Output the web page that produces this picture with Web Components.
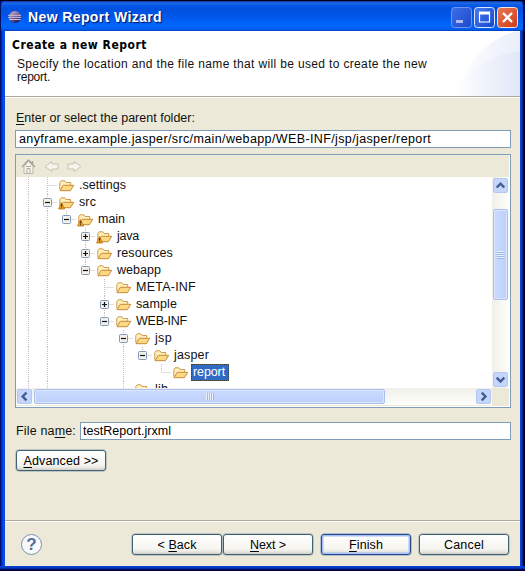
<!DOCTYPE html>
<html lang="en">
<head>
<meta charset="utf-8">
<title>New Report Wizard</title>
<style>
body{margin:0;width:525px;height:571px;overflow:hidden;background:#000;font:12.5px/14px "Liberation Sans",Arial,sans-serif;color:#111}
.body{display:flex;flex-direction:column;height:423px;padding:14px 9px 0 10px;box-sizing:border-box}
.label{margin-left:1px}
.file{display:flex;align-items:center;margin:14px 0 0 1px;height:18px}
.file fit-text{width:64px}
.file xp-field{flex:1}
.body .adv{margin:10px 0 0 1px}
.path{margin:5px 0}
.footer{display:flex;align-items:center;height:44px;padding:1px 11px 0 15px;box-sizing:border-box}
.gap{flex:1}
</style>
</head>
<body>
<xp-window>
  <fit-text slot="title" w="134">New Report Wizard</fit-text>
  <wizard-header>
    <fit-text slot="heading" w="135">Create a new Report</fit-text>
    <fit-text w="410">Specify the location and the file name that will be used to create the new</fit-text>
    <fit-text w="33">report.</fit-text>
  </wizard-header>
  <div class="body">
    <fit-text class="label" w="179"><u>E</u>nter or select the parent folder:</fit-text>
    <xp-field class="path"><fit-text w="412">anyframe.example.jasper/src/main/webapp/WEB-INF/jsp/jasper/report</fit-text></xp-field>
    <folder-tree>
      <tree-row cells="|T"><fit-text w="47">.settings</fit-text></tree-row>
      <tree-row cells="|-" warn><fit-text w="17">src</fit-text></tree-row>
      <tree-row cells="||m" warn><fit-text w="27">main</fit-text></tree-row>
      <tree-row cells="|| +" warn><fit-text w="22">java</fit-text></tree-row>
      <tree-row cells="|| +"><fit-text w="56">resources</fit-text></tree-row>
      <tree-row cells="|| m"><fit-text w="44">webapp</fit-text></tree-row>
      <tree-row cells="||  T"><fit-text w="60">META-INF</fit-text></tree-row>
      <tree-row cells="||  +"><fit-text w="41">sample</fit-text></tree-row>
      <tree-row cells="||  m"><fit-text w="51">WEB-INF</fit-text></tree-row>
      <tree-row cells="||   -"><fit-text w="17">jsp</fit-text></tree-row>
      <tree-row cells="||   |m"><fit-text w="35">jasper</fit-text></tree-row>
      <tree-row cells="||   | L" selected><fit-text w="32">report</fit-text></tree-row>
      <tree-row cells="||   T"><fit-text w="13">lib</fit-text></tree-row>
    </folder-tree>
    <div class="file"><fit-text w="60">File na<u>m</u>e:</fit-text><xp-field style="padding-left:2px"><fit-text w="88">testReport.jrxml</fit-text></xp-field></div>
    <xp-button class="adv"><fit-text w="75"><u>A</u>dvanced &gt;&gt;</fit-text></xp-button>
  </div>
  <div class="footer" slot="footer">
    <help-icon></help-icon><span class="gap"></span>
    <xp-button><fit-text w="39">&lt; <u>B</u>ack</fit-text></xp-button>
    <xp-button style="margin:0 8px 0 1px"><fit-text w="36"><u>N</u>ext &gt;</fit-text></xp-button>
    <xp-button default><fit-text w="34"><u>F</u>inish</fit-text></xp-button>
    <xp-button style="margin-left:8px"><fit-text w="40">Cancel</fit-text></xp-button>
  </div>
</xp-window>

<script>
function define(name, html, setup) {
  customElements.define(name, class extends HTMLElement {
    connectedCallback() {
      if (this.shadowRoot) return;
      const t = document.createElement('template');
      t.innerHTML = typeof html === 'function' ? html(this) : html;
      this.attachShadow({mode: 'open'}).appendChild(t.content.cloneNode(true));
      if (setup) setup(this);
    }
  });
}

define('xp-window', `<style>
:host{display:flex;flex-direction:column;width:525px;height:571px;box-sizing:border-box;padding:1px 5px 5px;position:relative;
 background:linear-gradient(90deg,#000030 0,#0019b0 1px,#0038d8 2px,#0a50ea 4px,#0648d8 5px,#0648d8 519px,#1048d0 520px,#0833bb 522px,#000f70 523px,#00001c 524px)}
:host::after{content:"";position:absolute;left:0;right:0;bottom:0;height:5px;background:linear-gradient(#0b45d5 0,#0632bd 2px,#001a88 3px,#000042 4px,#000025 5px)}
.bar{height:30px;flex-shrink:0;margin:0 -5px;padding:2px 5px 0 7px;box-sizing:border-box;display:flex;align-items:center;border-radius:5px 5px 0 0;border-right:2px solid #001063;border-left:1px solid #001063;
 background:linear-gradient(#0a3799 0,#2269e6 2px,#0759e8 4px,#0050de 8px,#0057eb 16px,#0066ff 24px,#0061f6 28px,#003ec2 30px)}
.title{flex:1;margin-left:6px;color:#fff;font:bold 14px/18px "Liberation Sans",sans-serif;text-shadow:1px 1px 1px #00146d}
svg{display:block}
.page{flex:1;background:#ece9d8;display:flex;flex-direction:column}
.sep{height:1px;background:#aca899;border-bottom:1px solid #fff}
window-button{margin-left:2px}
:host::before{content:"";position:absolute;left:0;right:0;top:0;height:1px;background:#00001e}
</style>
<div class="bar"><svg width="14" height="14" viewBox="0 0 14 14"><defs><linearGradient id="g" x2=".6" y2="1"><stop stop-color="#e3b9c2"/><stop offset=".5" stop-color="#7d68a0"/><stop offset="1" stop-color="#241c5c"/></linearGradient></defs><circle cx="7" cy="7" r="5.9" fill="url(#g)"/><path d="M0 5.3h13M0 7.4h13M1 9.5h11.5" stroke="#d9cbe4" stroke-width=".9"/></svg>
<div class="title"><slot name="title"></slot></div>
<window-button kind="min"></window-button><window-button kind="max"></window-button><window-button kind="close"></window-button></div>
<div class="page"><slot></slot><div class="sep"></div><slot name="footer"></slot></div>`);

define('window-button', el => {
  const k = el.getAttribute('kind');
  const glyph = {min: '<path d="M5 14.5h7" stroke="#a9bdf2" stroke-width="3"/>',
    max: '<path d="M5.5 6v9h10V6zM5 6.5h11" fill="none" stroke="#fff" stroke-width="1.2"/><path d="M5 6h11" stroke="#fff" stroke-width="3"/>',
    close: '<path d="M6 6l9 9M15 6l-9 9" stroke="#fff" stroke-width="2.3"/>'}[k];
  const c = {min: ['#3d70e8', '#1c47cb', '#7195ef'], max: ['#4b7cee', '#1245cf', '#dce7ff'], close: ['#ea7b58', '#cf3a15', '#fbe2da']}[k];
  return `<style>:host{display:block;width:21px;height:21px}svg{display:block}</style><svg width="21" height="21"><defs><linearGradient id="a" x2="1" y2="1"><stop stop-color="${c[0]}"/><stop offset="1" stop-color="${c[1]}"/></linearGradient></defs><rect x=".5" y=".5" width="20" height="20" rx="3" fill="url(#a)" stroke="${c[2]}"/>${glyph}</svg>`;
});

define('wizard-header', `<style>
:host{display:block;height:66px;box-sizing:border-box;padding:7px 0 0 12px;border-bottom:1px solid #aca899;box-shadow:0 1px #fff;font-size:12px;line-height:13px;position:relative;
background:#fff}
.h{font:bold 12px/14px "DejaVu Sans Condensed","DejaVu Sans",sans-serif;margin:0 0 6px -5px;color:#000}
svg{position:absolute;right:0;top:0}
.h,.t{position:relative}
</style><svg width="72" height="65"><defs><linearGradient id="a"><stop stop-color="#fff"/><stop offset="1" stop-color="#dde5f6"/></linearGradient><linearGradient id="b"><stop stop-color="#fff"/><stop offset="1" stop-color="#e9eef9"/></linearGradient></defs><path d="M8 65C14 36 42 4 72 0v65z" fill="url(#b)"/><path d="M6 65C18 38 42 24 72 20v45z" fill="url(#a)" opacity=".8"/></svg><div class="h"><slot name="heading"></slot></div><div class="t"><slot></slot></div>`);

define('xp-field', `<style>:host{display:flex;align-items:center;height:18px;box-sizing:border-box;border:1px solid #7f9db9;background:#fff;padding-left:3px;flex-shrink:0;color:#000}</style><slot></slot>`);

define('xp-button', `<style>
:host{display:flex;align-items:center;justify-content:center;width:90px;height:21px;box-sizing:border-box;border:1px solid #3f6278;border-radius:3px;color:#000;flex-shrink:0;
background:linear-gradient(#fff,#f6f5f0 70%,#ecebe6 85%,#d2cec2);box-shadow:0 0 0 .5px #8fa2ab}
:host([default]){border-color:#28478a;box-shadow:inset 0 0 0 1.5px #a5c1f5,0 0 0 .5px #7e95c6}
</style><slot></slot>`);

define('help-icon', `<style>:host{display:grid;place-items:center;width:19px;height:19px;border:1.5px solid #7d8dac;border-radius:50%;background:#f8f9fb;color:#526d9c;font:bold 17px/19px "Liberation Sans",sans-serif;margin-left:1px}</style>?`);

define('xp-scrollbar', el => {
  const v = el.hasAttribute('vertical');
  const arrow = d => `<svg class="b" width="15" height="15"><rect x=".5" y=".5" width="14" height="14" rx="1.5" fill="#c5d5fc" stroke="#b4c7f3"/><path d="${d}" fill="none" stroke="#435c91" stroke-width="2.4"/></svg>`;
  return `<style>
:host{display:flex;flex-direction:${v ? 'column' : 'row'};box-sizing:border-box;padding:1px;background:linear-gradient(${v ? '90deg' : '180deg'},#f0efe9,#fefefb)}
svg{display:block;flex-shrink:0}
.thumb{box-sizing:border-box;border:1px solid #a9bff0;border-radius:2px;box-shadow:inset 0 0 0 1px #dce6ff;display:grid;place-items:center;flex-shrink:0;margin:${v ? '16px 0 0' : '0 2px'};
${v ? 'width:15px;height:91px' : 'height:15px;width:351px'};background:linear-gradient(${v ? '90deg' : '180deg'},#cbdafe,#bdcffb)}
.grip{${v ? 'width:7px;height:8px' : 'width:8px;height:7px'};background:repeating-linear-gradient(${v ? '180deg' : '90deg'},#eaf1ff 0 1px,#9db6ed 1px 2px)}
.gap{flex:1}</style>${arrow(v ? 'M3.7 9.5l3.8-3.8 3.8 3.8' : 'M9.5 3.7L5.7 7.5l3.8 3.8')}<div class="thumb"><div class="grip"></div></div><div class="gap"></div>${arrow(v ? 'M3.7 5.7l3.8 3.8 3.8-3.8' : 'M5.7 3.7l3.8 3.8-3.8 3.8')}`;
});

define('folder-tree', `<style>
:host{display:grid;grid-template:22px 211px 1fr / 1fr 17px;height:254px;box-sizing:border-box;border:1px solid #7f9db9;background:#ece9d8;flex-shrink:0;box-shadow:inset -1px -1px #fff;padding-right:1px;margin-top:1px}
.tools{grid-column:1/3;padding:3px 0 0 5px}
.rows{background:#fff;overflow:hidden;padding-left:3px;height:211px;box-sizing:border-box}
svg{display:block}
xp-scrollbar[vertical]{height:211px}
xp-scrollbar{height:17px}
</style>
<div class="tools"><svg width="64" height="18" fill="#f6f4ec" stroke="#bab6aa"><path d="M3 8.5v7h9v-7L7.5 3z"/><path d="M1 9l6.5-7 6.5 7M11.5 3v3" fill="none" stroke-width="1.5" stroke="#aba799"/><path d="M6 15v-4.5h3V15M5 8.5h5" fill="none" stroke="#aba799"/><path d="M31 3.5L24 8.5l7 5V11h6V6h-6zM53 3.5l7 5-7 5V11h-6V6h6z" stroke="#c6c3b8" stroke-linejoin="round"/></svg></div>
<div class="rows"><slot></slot></div><xp-scrollbar vertical></xp-scrollbar><xp-scrollbar></xp-scrollbar>`);

define('tree-row', el => {
  const dash = 'stroke="#c8bdbb" stroke-dasharray="1 1" fill="none"';
  const cells = [...el.getAttribute('cells')].map(c => {
    let s = '';
    if (c !== ' ') s += `<path d="M9.5 0V${'Lm'.includes(c) ? 8.5 : 17}" ${dash}/>`;
    if (c !== ' ' && c !== '|') s += `<path d="M9.5 8.5H19" ${dash}/>`;
    if ('+-m'.includes(c)) s += `<rect x="5.5" y="4.5" width="8" height="8" rx="1" fill="#f2f1ec" stroke="#8298b6"/><path d="M7 8.5h5${c === '+' ? 'M9.5 6v5' : ''}" stroke="#111" stroke-width="1.2"/>`;
    return `<svg width="19" height="17">${s}</svg>`;
  }).join('');
  const warn = el.hasAttribute('warn') ? '<path d="M3.5 8.5L6.6 15H.6z" fill="#f5ad2d" stroke="#b86d12" stroke-width=".8"/><path d="M3.6 10.3v2.3M3.6 13.2v1" stroke="#3f2606" stroke-width="1.1"/>' : '';
  return `<style>
:host{display:flex;height:17px;color:#111;white-space:nowrap;align-items:center}
svg{display:block;flex-shrink:0}
.icon{margin-left:1px}
.label{height:17px;box-sizing:border-box;margin-left:2px;padding:1px 3px 0 2px;line-height:15px}
:host([selected]) .label{background:#316ac5;color:#fff;outline:1px dotted #443f2c;outline-offset:-1px;padding-right:4px}
</style>${cells}<svg class="icon" width="17" height="17"><path d="M1.8 12.5V5.5L3.2 3.8h3.6l1.3 1.7h4.6v3" fill="#fff0bb" stroke="#cf9a4a"/><path d="M2 13.7L5.3 8.3h10.4l-3.3 5.4z" fill="#fcda83" stroke="#c78a3a" stroke-linejoin="round"/>${warn}</svg><span class="label"><slot></slot></span>`;
});

/* One line of text, tracked so that it takes up exactly the width in "w". */
define('fit-text', `<style>:host{display:block;white-space:nowrap}span{display:inline-block;vertical-align:top}::slotted(u){text-decoration:underline;text-underline-offset:2px;text-decoration-thickness:1px}</style><span><slot></slot></span>`, el => {
  const span = el.shadowRoot.querySelector('span');
  span.style.letterSpacing = '0px';
  const spare = +el.getAttribute('w') - span.getBoundingClientRect().width;
  span.style.letterSpacing = (spare / el.textContent.length).toFixed(3) + 'px';
});
</script>
</body>
</html>
